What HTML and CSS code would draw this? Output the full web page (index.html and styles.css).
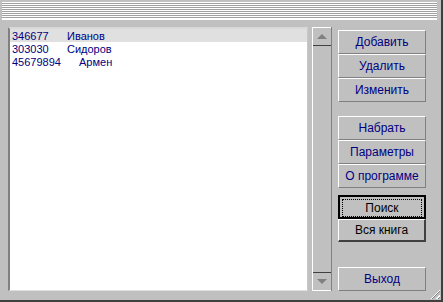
FILE: index.html
```html
<!DOCTYPE html>
<html lang="ru">
  <head>
    <meta charset="UTF-8" />
    <title>Телефонная книга</title>
    <link rel="stylesheet" href="styles.css">
  </head>
  <body>
    <div class="window">
      <div class="titlebar"></div>

      <div class="main">
        <div class="listbox">
          <div class="row selected"><span class="num">346677</span><span class="name">Иванов</span></div>
          <div class="row"><span class="num">303030</span><span class="name">Сидоров</span></div>
          <div class="row"><span class="num">45679894</span><span class="name shifted">Армен</span></div>
        </div>

        <div class="scrollbar">
          <div class="arrow up"><span class="tri"></span></div>
          <div class="track"></div>
          <div class="arrow down"><span class="tri"></span></div>
        </div>

        <div class="buttons">
          <div class="group">
            <button class="flat">Добавить</button>
            <button class="flat">Удалить</button>
            <button class="flat">Изменить</button>
          </div>
          <div class="group">
            <button class="flat">Набрать</button>
            <button class="flat">Параметры</button>
            <button class="flat">О программе</button>
          </div>
          <div class="group">
            <button class="std default"><span class="focus">Поиск</span></button>
            <button class="std">Вся книга</button>
          </div>
          <div class="spacer"></div>
          <button class="flat exit">Выход</button>
        </div>
      </div>

      <div class="grip"></div>
    </div>
  </body>
</html>
```

FILE: styles.css
```css
body {
  margin: 0;
  font-family: "Liberation Sans", Arial, sans-serif;
  font-size: 11px;
}

.window {
  position: relative;
  width: 441px;
  height: 300px;
  background-color: #c0c0c0;
  border-right: 2px solid #404040;
  border-bottom: 2px solid #404040;
  display: flex;
  flex-direction: column;
}

.titlebar {
  height: 17px;
  margin: 2px 4px 0 2px;
  background: repeating-linear-gradient(
    to bottom,
    #ffffff 0,
    #ffffff 1px,
    #a0a0a0 1px,
    #a0a0a0 2px
  );
  border-bottom: 1px solid #ffffff;
}

.main {
  flex: 1;
  display: flex;
  padding: 7px 12px 9px 8px;
}

.listbox {
  width: 297px;
  background-color: #ffffff;
  border-left: 2px solid #808080;
  border-top: 2px solid #d8d8d8;
  border-right: 1px solid #c8c8c8;
  border-bottom: 1px solid #e0e0e0;
  color: #000080;
}

.row {
  display: flex;
  height: 13px;
  line-height: 14px;
  padding-left: 2px;
}

.row.selected {
  background-color: #e0e0e0;
}

.num {
  width: 55px;
}

.name.shifted {
  padding-left: 12px;
}

.scrollbar {
  width: 18px;
  margin-left: 4px;
  display: flex;
  flex-direction: column;
  border-left: 1px solid #ffffff;
  border-right: 1px solid #808080;
}

.arrow {
  height: 17px;
  display: flex;
  align-items: center;
  justify-content: center;
  border-top: 1px solid #ffffff;
  border-bottom: 1px solid #404040;
}

.arrow.down {
  border-top: 1px solid #404040;
  border-bottom: 1px solid #ffffff;
}

.tri {
  width: 0;
  height: 0;
  border-left: 5px solid transparent;
  border-right: 5px solid transparent;
}

.up .tri {
  border-bottom: 5px solid #808080;
}

.down .tri {
  border-top: 5px solid #808080;
}

.track {
  flex: 1;
  background-color: #c0c0c0;
}

.buttons {
  width: 88px;
  margin-left: 6px;
  display: flex;
  flex-direction: column;
  padding-top: 3px;
}

.group {
  display: flex;
  flex-direction: column;
  margin-bottom: 14px;
}

.group:nth-child(2) {
  margin-bottom: 7px;
}

button {
  height: 24px;
  font-family: inherit;
  font-size: 12px;
  background-color: #c0c0c0;
  padding: 0;
}

.flat {
  color: #000080;
  border-top: 1px solid #ffffff;
  border-left: 1px solid #ffffff;
  border-right: 1px solid #808080;
  border-bottom: 1px solid #808080;
}

.std {
  color: #000000;
  height: 23px;
  border-top: 1px solid #ffffff;
  border-left: 1px solid #ffffff;
  border-right: 2px solid #404040;
  border-bottom: 2px solid #404040;
}

.std.default {
  height: 24px;
  border: 2px solid #000000;
  padding: 2px;
}

.focus {
  display: block;
  height: 16px;
  line-height: 16px;
  border: 1px dotted #000000;
}

.spacer {
  flex: 1;
}

.exit {
  height: 24px;
}

.grip {
  position: absolute;
  right: 1px;
  bottom: 1px;
  width: 12px;
  height: 12px;
  background: repeating-linear-gradient(
    135deg,
    transparent 0,
    transparent 2px,
    #ffffff 2px,
    #ffffff 3px,
    #808080 3px,
    #808080 4px
  );
  clip-path: polygon(100% 0, 100% 100%, 0 100%);
}
```
